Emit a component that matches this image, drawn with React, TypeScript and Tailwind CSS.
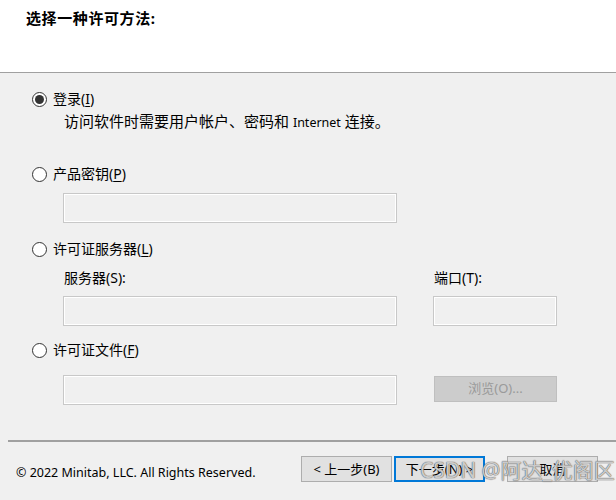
const font = { fontFamily: '"Noto Sans", "Noto Sans CJK SC", sans-serif' };

function Radio({ checked, label, hotkey }: { checked?: boolean; label: string; hotkey: string }) {
  return (
    <div className="flex h-[20px] items-center gap-[6px]">
      <span className="grid h-[15px] w-[15px] place-items-center rounded-full border border-[#333] bg-white">
        {checked && <span className="h-[9px] w-[9px] rounded-full bg-[#333]" />}
      </span>
      <span className="text-[14px] leading-none text-black">
        {label}(<span className="underline underline-offset-2">{hotkey}</span>)
      </span>
    </div>
  );
}

function Field({ className = '' }: { className?: string }) {
  return (
    <div
      className={`h-[30px] border border-[#c8c8c8] bg-[#f0f0f0] shadow-[inset_0_0_0_1px_#ffffff] ${className}`}
    />
  );
}

function Button({ children, focused }: { children: React.ReactNode; focused?: boolean }) {
  return (
    <button
      type="button"
      className={`flex h-[26px] w-[91px] items-center justify-center bg-[#e1e1e1] text-[13px] text-black ${
        focused ? 'border-2 border-[#0078d7]' : 'border border-[#adadad]'
      }`}
    >
      {children}
    </button>
  );
}

export default function App() {
  return (
    <div className="relative h-[500px] w-[616px] overflow-hidden bg-[#f0f0f0]" style={font}>
      <header className="h-[73px] border-b border-[#a0a0a0] bg-white pl-[26px] pt-[9px]">
        <h1 className="text-[15px] font-bold leading-[18px] tracking-[0.6px] text-black">选择一种许可方法:</h1>
      </header>

      <main className="pl-[32px] pt-[16px]">
        <Radio checked label="登录" hotkey="I" />
        <p className="mt-[2px] h-[20px] pl-[32px] text-[15px] leading-[20px] text-black">
          访问软件时需要用户帐户、密码和 <span className="text-[12.5px]">Internet</span> 连接。
        </p>

        <div className="mt-[33px]">
          <Radio label="产品密钥" hotkey="P" />
        </div>
        <Field className="ml-[31px] mt-[9px] w-[334px]" />

        <div className="mt-[16px]">
          <Radio label="许可证服务器" hotkey="L" />
        </div>
        <div className="ml-[32px] mt-[9px] flex h-[20px] items-center text-[14px] leading-none text-black">
          <span className="w-[370px]">服务器(S):</span>
          <span>端口(T):</span>
        </div>
        <div className="ml-[31px] mt-[8px] flex gap-[36px]">
          <Field className="w-[334px]" />
          <Field className="w-[124px]" />
        </div>

        <div className="mt-[14px]">
          <Radio label="许可证文件" hotkey="F" />
        </div>
        <div className="ml-[31px] mt-[15px] flex items-start gap-[37px]">
          <Field className="w-[334px]" />
          <button
            type="button"
            className="mt-[1px] flex h-[26px] w-[123px] items-center justify-center border border-[#bfbfbf] bg-[#cccccc] text-[13px] text-[#9a9a9a]"
          >
            浏览(O)...
          </button>
        </div>
      </main>

      <footer className="ml-[8px] mt-[35px] border-t-2 border-[#a0a0a0] pt-[14px]">
        <div className="flex items-center">
          <span className="ml-[8px] w-[285px] pt-[8px] text-[12.5px] text-black">
            © 2022 Minitab, LLC. All Rights Reserved.
          </span>
          <div className="flex gap-[2px]">
            <Button>&lt; 上一步(B)</Button>
            <Button focused>下一步(N) &gt;</Button>
          </div>
          <div className="ml-[22px]">
            <Button>取消</Button>
          </div>
        </div>
      </footer>

      <div className="pointer-events-none absolute left-[420px] top-[460px] text-[21px] leading-none text-white/70 [text-shadow:0_0_1px_#555,0_0_1px_#555]">
        CSDN @阿达_优阁区
      </div>
    </div>
  );
}
